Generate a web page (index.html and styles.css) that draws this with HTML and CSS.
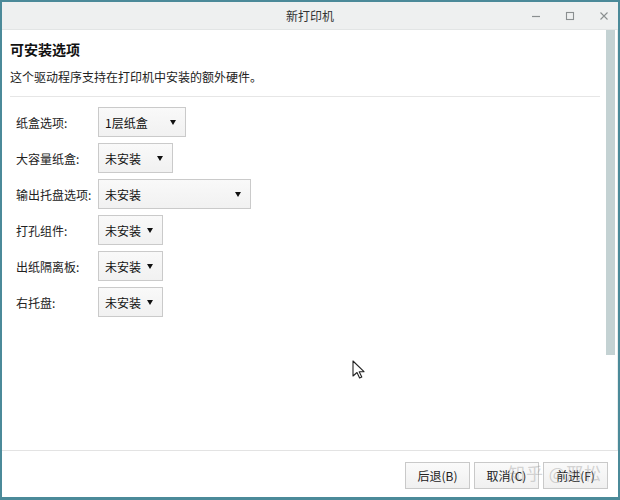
FILE: index.html
```html
<!DOCTYPE html>
<html lang="zh">
<head>
<meta charset="utf-8">
<link rel="stylesheet" href="styles.css">
</head>
<body>
<div class="window">
  <div class="titlebar">
    <div class="title">新打印机</div>
    <div class="controls">
      <svg class="ctl" width="12" height="12" viewBox="0 0 12 12"><path d="M2 6.5h8" stroke="#8a8f90" stroke-width="1.2"/></svg>
      <svg class="ctl" width="12" height="12" viewBox="0 0 12 12"><rect x="2.5" y="2.5" width="7" height="7" fill="none" stroke="#8a8f90" stroke-width="1.1"/></svg>
      <svg class="ctl" width="12" height="12" viewBox="0 0 12 12"><path d="M2.5 2.5l7 7M9.5 2.5l-7 7" stroke="#8a8f90" stroke-width="1.1"/></svg>
    </div>
  </div>
  <div class="main">
    <div class="content">
      <h1 class="heading">可安装选项</h1>
      <p class="desc">这个驱动程序支持在打印机中安装的额外硬件。</p>
      <div class="sep"></div>
      <div class="form">
        <div class="label">纸盒选项:</div>
        <div class="select w88"><span>1层纸盒</span><i class="arrow"></i></div>
        <div class="label">大容量纸盒:</div>
        <div class="select w75"><span>未安装</span><i class="arrow"></i></div>
        <div class="label">输出托盘选项:</div>
        <div class="select w153"><span>未安装</span><i class="arrow"></i></div>
        <div class="label">打孔组件:</div>
        <div class="select w65"><span>未安装</span><i class="arrow"></i></div>
        <div class="label">出纸隔离板:</div>
        <div class="select w65"><span>未安装</span><i class="arrow"></i></div>
        <div class="label">右托盘:</div>
        <div class="select w65"><span>未安装</span><i class="arrow"></i></div>
      </div>
    </div>
    <div class="scrolltrack"><div class="thumb"></div></div>
  </div>
  <div class="footer">
    <button class="btn">后退(B)</button>
    <button class="btn">取消(C)</button>
    <button class="btn">前进(F)</button>
  </div>
  <svg class="cursor" width="14" height="20" viewBox="0 0 14 20"><path d="M1 1v15l4-3.5 2.6 5.5 2.2-1-2.6-5.3H12z" fill="#fff" stroke="#222" stroke-width="1.1" stroke-linejoin="round"/></svg>
  <div class="watermark">知乎 @邢松</div>
</div>
</body>
</html>
```
FILE: styles.css
```css
* { box-sizing: border-box; }
html, body { margin: 0; padding: 0; background: #fff; }
body {
  font-family: "Noto Sans CJK SC", "Noto Sans", sans-serif;
  color: #1e1e1e;
}
.window {
  position: relative;
  width: 620px;
  height: 500px;
  border: 2px solid #4b8a99;
  border-bottom-width: 3px;
  display: flex;
  flex-direction: column;
  background: #fff;
  overflow: hidden;
}
.titlebar {
  height: 28px;
  background: #eef0f0;
  border-bottom: 1px solid #e2e5e5;
  display: flex;
  align-items: center;
  justify-content: center;
  position: relative;
  flex: none;
}
.title {
  font-size: 12px;
  color: #333;
}
.controls {
  position: absolute;
  right: 8px;
  top: 8px;
  display: flex;
  gap: 22px;
}
.ctl { display: block; }
.main {
  flex: 1;
  display: flex;
  min-height: 0;
  border-bottom: 1px solid #e3e3e3;
}
.content {
  flex: 1;
  padding: 9px 6px 0 8px;
}
.heading {
  margin: 0;
  font-size: 14px;
  line-height: 20px;
  font-weight: bold;
  color: #111;
}
.desc {
  margin: 9px 0 0 0;
  font-size: 12px;
  line-height: 18px;
  color: #222;
}
.sep {
  height: 1px;
  background: #e6e6e6;
  margin-top: 10px;
}
.form {
  margin-top: 10px;
  display: grid;
  grid-template-columns: 82px auto;
  justify-content: start;
  justify-items: start;
  align-items: center;
  row-gap: 6px;
  padding-left: 6px;
}
.label {
  font-size: 12px;
  color: #222;
}
.select {
  height: 30px;
  border: 1px solid #cacaca;
  background: linear-gradient(#f9f9f9, #f1f1f1);
  display: flex;
  align-items: center;
  justify-content: space-between;
  padding: 0 9px 0 6px;
  font-size: 12px;
  color: #111;
}
.w88 { width: 88px; }
.w75 { width: 75px; }
.w153 { width: 153px; }
.w65 { width: 65px; }
.arrow {
  width: 0;
  height: 0;
  border-left: 3.5px solid transparent;
  border-right: 3.5px solid transparent;
  border-top: 5px solid #111;
}
.scrolltrack {
  width: 12px;
  padding: 0 2px 0 0;
  flex: none;
  border-right: 1px solid #e8eded;
}
.thumb {
  width: 9px;
  height: 325px;
  background: #c4d2d3;
}
.footer {
  height: 46px;
  flex: none;
  display: flex;
  justify-content: flex-end;
  align-items: flex-start;
  gap: 4px;
  padding: 11px 10px 0 0;
}
.btn {
  width: 65px;
  height: 27px;
  border: 1px solid #c9c9c9;
  background: linear-gradient(#fafafa, #f0f0f0);
  font-family: "Noto Sans CJK SC", "Noto Sans", sans-serif;
  font-size: 12px;
  color: #222;
  padding: 0;
}
.cursor {
  position: absolute;
  left: 350px;
  top: 358px;
}
.watermark {
  position: absolute;
  left: 506px;
  top: 458px;
  font-size: 17px;
  color: rgba(150, 150, 150, 0.4);
  letter-spacing: 1px;
  pointer-events: none;
}
```
